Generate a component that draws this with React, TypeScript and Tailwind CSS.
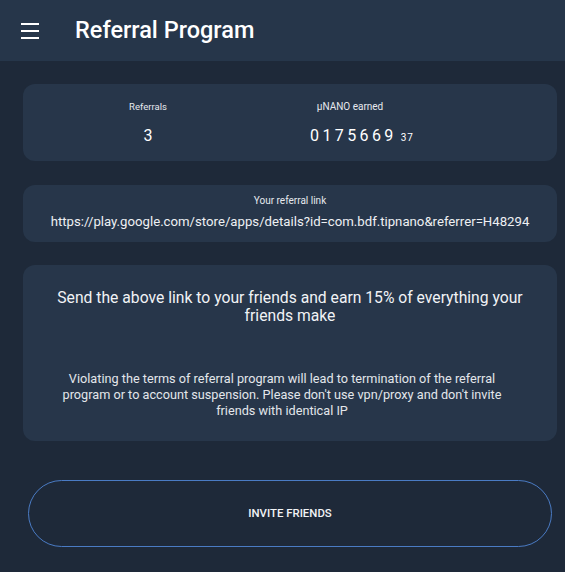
const Card = ({ className, children }: { className?: string; children: React.ReactNode }) => (
  <div className={`ml-[23px] mr-[8px] rounded-[12px] bg-[#27364a] ${className ?? ''}`}>{children}</div>
);

export default function App() {
  return (
    <div className="h-[572px] w-[565px] bg-[#1e2939] text-white font-['Roboto',sans-serif] overflow-hidden">
      <header className="h-[61px] bg-[#26364a] flex items-center">
        <div className="w-[75px] pl-[21px] flex items-center">
          <div className="flex flex-col gap-[5px] w-[18px]">
            <span className="block h-[2px] bg-white" />
            <span className="block h-[2px] bg-white" />
            <span className="block h-[2px] bg-white" />
          </div>
        </div>
        <h1 className="text-[23.5px] font-medium text-white">Referral Program</h1>
      </header>

      <Card className="mt-[23px] h-[77px] flex">
        <div className="w-[250px] flex flex-col items-center pt-[17px]">
          <p className="text-[9.5px] text-[#e6e9ee] leading-[12px]">Referrals</p>
          <p className="mt-[14px] text-[16px] leading-[18px]">3</p>
        </div>
        <div className="w-[154px] flex flex-col items-center pt-[17px]">
          <p className="text-[10px] text-[#e6e9ee] leading-[12px]">μNANO earned</p>
          <p className="mt-[14px] leading-[18px] flex items-baseline self-start ml-[37px]">
            <span className="text-[16px] tracking-[3.4px]">0175669</span>
            <span className="text-[10px] tracking-[1px] ml-[4px]">37</span>
          </p>
        </div>
      </Card>

      <Card className="mt-[24px] h-[57px] flex flex-col items-center pt-[10px]">
        <p className="text-[10px] text-[#e6e9ee] leading-[12px]">Your referral link</p>
        <p className="mt-[7px] text-[13.2px] leading-[16px] text-[#eef0f3]">
          https://play.google.com/store/apps/details?id=com.bdf.tipnano&amp;referrer=H48294
        </p>
      </Card>

      <Card className="mt-[23px] h-[176px] flex flex-col items-center px-[20px] pt-[24px] text-center">
        <p className="text-[15.7px] leading-[18px] text-[#f1f3f6]">
          Send the above link to your friends and earn 15% of everything your friends make
        </p>
        <p className="mt-[46px] pl-[12px] pr-[28px] text-[12.7px] leading-[16px] text-[#e3e6eb]">
          Violating the terms of referral program will lead to termination of the referral program or to account suspension. Please don't use vpn/proxy and don't invite friends with identical IP
        </p>
      </Card>

      <div className="mt-[39px] ml-[28px] mr-[13px] h-[67px] rounded-full border-[1.5px] border-[#4a7bc4] flex items-center justify-center">
        <span className="text-[11.4px] font-medium text-[#f1f3f6]">INVITE FRIENDS</span>
      </div>
    </div>
  );
}
